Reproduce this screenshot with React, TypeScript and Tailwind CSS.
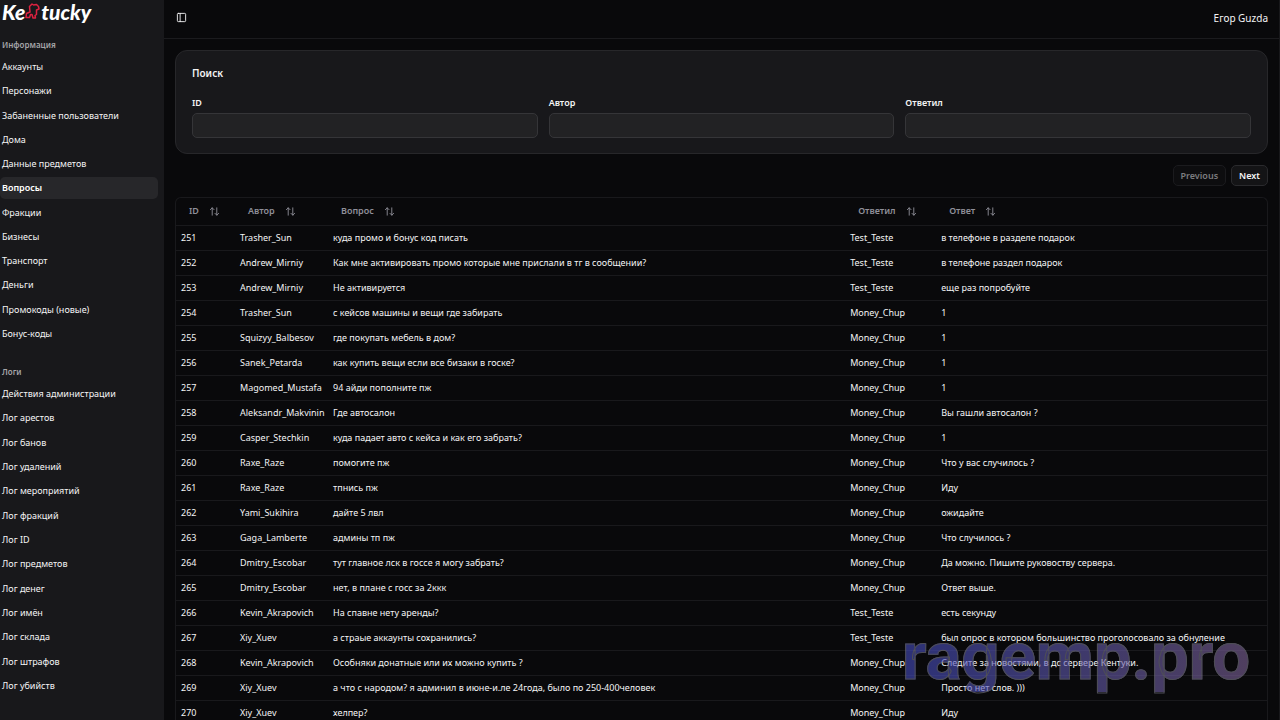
import React from "react";
import { ArrowUpDown, PanelLeft } from "lucide-react";

type Question = {
  id: number;
  author: string;
  question: string;
  answeredBy: string;
  answer: string;
};

const infoLinks = [
  "Аккаунты",
  "Персонажи",
  "Забаненные пользователи",
  "Дома",
  "Данные предметов",
  "Вопросы",
  "Фракции",
  "Бизнесы",
  "Транспорт",
  "Деньги",
  "Промокоды (новые)",
  "Бонус-коды",
];

const logLinks = [
  "Действия администрации",
  "Лог арестов",
  "Лог банов",
  "Лог удалений",
  "Лог мероприятий",
  "Лог фракций",
  "Лог ID",
  "Лог предметов",
  "Лог денег",
  "Лог имён",
  "Лог склада",
  "Лог штрафов",
  "Лог убийств",
];

const questions: Question[] = [
  { id: 251, author: "Trasher_Sun", question: "куда промо и бонус код писать", answeredBy: "Test_Teste", answer: "в телефоне в разделе подарок" },
  { id: 252, author: "Andrew_Mirniy", question: "Как мне активировать промо которые мне прислали в тг в сообщении?", answeredBy: "Test_Teste", answer: "в телефоне раздел подарок" },
  { id: 253, author: "Andrew_Mirniy", question: "Не активируется", answeredBy: "Test_Teste", answer: "еще раз попробуйте" },
  { id: 254, author: "Trasher_Sun", question: "с кейсов машины и вещи где забирать", answeredBy: "Money_Chup", answer: "1" },
  { id: 255, author: "Squizyy_Balbesov", question: "где покупать мебель в дом?", answeredBy: "Money_Chup", answer: "1" },
  { id: 256, author: "Sanek_Petarda", question: "как купить вещи если все бизаки в госке?", answeredBy: "Money_Chup", answer: "1" },
  { id: 257, author: "Magomed_Mustafa", question: "94 айди пополните пж", answeredBy: "Money_Chup", answer: "1" },
  { id: 258, author: "Aleksandr_Makvinin", question: "Где автосалон", answeredBy: "Money_Chup", answer: "Вы гашли автосалон ?" },
  { id: 259, author: "Casper_Stechkin", question: "куда падает авто с кейса и как его забрать?", answeredBy: "Money_Chup", answer: "1" },
  { id: 260, author: "Raxe_Raze", question: "помогите пж", answeredBy: "Money_Chup", answer: "Что у вас случилось ?" },
  { id: 261, author: "Raxe_Raze", question: "тпнись пж", answeredBy: "Money_Chup", answer: "Иду" },
  { id: 262, author: "Yami_Sukihira", question: "дайте 5 лвл", answeredBy: "Money_Chup", answer: "ожидайте" },
  { id: 263, author: "Gaga_Lamberte", question: "админы тп пж", answeredBy: "Money_Chup", answer: "Что случилось ?" },
  { id: 264, author: "Dmitry_Escobar", question: "тут главное лск в госсе я могу забрать?", answeredBy: "Money_Chup", answer: "Да можно. Пишите руковоству сервера." },
  { id: 265, author: "Dmitry_Escobar", question: "нет, в плане с госс за 2ккк", answeredBy: "Money_Chup", answer: "Ответ выше." },
  { id: 266, author: "Kevin_Akrapovich", question: "На спавне нету аренды?", answeredBy: "Test_Teste", answer: "есть секунду" },
  { id: 267, author: "Xiy_Xuev", question: "а страые аккаунты сохранились?", answeredBy: "Test_Teste", answer: "был опрос в котором большинство проголосовало за обнуление" },
  { id: 268, author: "Kevin_Akrapovich", question: "Особняки донатные или их можно купить ?", answeredBy: "Money_Chup", answer: "Следите за новостями, в дс сервере Кентуки." },
  { id: 269, author: "Xiy_Xuev", question: "а что с народом? я админил в июне-и.ле 24года, было по 250-400человек", answeredBy: "Money_Chup", answer: "Просто нет слов. )))" },
  { id: 270, author: "Xiy_Xuev", question: "хелпер?", answeredBy: "Money_Chup", answer: "Иду" },
];

const columns = [
  { title: "ID", width: "w-[59px]" },
  { title: "Автор", width: "w-[93px]" },
  { title: "Вопрос", width: "w-[47.4%]" },
  { title: "Ответил", width: "w-[91px]" },
  { title: "Ответ", width: "" },
];

const Logo = () => {
  return (
    <a
      href="#"
      aria-label="Kentucky"
      className="flex h-6 items-start pl-[2px] font-['Lato',sans-serif] text-[21px] leading-6 font-black italic text-white"
    >
      <span>Ke</span>
      <svg viewBox="0 0 16 20" className="h-5 w-4" fill="none" stroke="#dc2240" strokeWidth="1.5" strokeLinejoin="round">
        <path d="M1 17.5 1.5 13.5 5 12 4.5 6.5 7 4 8.5 5 11.5 4.5 13.5 6.5 14 9 11.5 10 11.5 14.5 10 15.5 10.5 18 8 18 7 14.5 5.5 14.5 4.5 17.5Z" />
      </svg>
      <span>tucky</span>
    </a>
  );
};

type LinksProps = {
  title: string;
  links: string[];
  height: string;
};

const SidebarGroup = ({ title, links, height }: LinksProps) => {
  return (
    <section>
      <h2 className="flex h-[22px] items-center px-[2px] text-[8px] font-semibold text-[#a5a5a9]">
        {title}
      </h2>
      <ul className={`flex flex-col justify-between ${height}`}>
        {links.map((link) => (
          <li key={link}>
            <a
              href="#"
              className={
                link === "Вопросы"
                  ? "flex h-[22px] items-center rounded-[5px] bg-[#27272a] px-[2px] font-semibold text-white"
                  : "flex h-[22px] items-center rounded-[5px] px-[2px]"
              }
            >
              {link}
            </a>
          </li>
        ))}
      </ul>
    </section>
  );
};

const SearchCard = () => {
  return (
    <form className="rounded-xl border border-[#27272a] bg-[#18181b] px-4 pt-4 pb-[15px]">
      <h1 className="text-[10px] leading-3 font-semibold">Поиск</h1>
      <div className="mt-[17px] grid grid-cols-3 gap-[11px]">
        {["ID", "Автор", "Ответил"].map((name) => (
          <div key={name} className="flex flex-col gap-[3px]">
            <label htmlFor={`search-${name}`} className="leading-[14px] font-semibold">
              {name}
            </label>
            <input
              id={`search-${name}`}
              type="text"
              className="h-[25px] w-full rounded-[5px] border border-[#353538] bg-[#222224] px-2 outline-none"
            />
          </div>
        ))}
      </div>
    </form>
  );
};

const QuestionsTable = () => {
  return (
    <div className="overflow-hidden rounded-t-[6px] border border-b-0 border-[#19191c]">
      <table className="w-full table-fixed text-left">
        <thead>
          <tr className="h-[27px] border-b border-[#19191c]">
            {columns.map((column) => (
              <th key={column.title} className={`p-0 pl-[13px] font-semibold text-[#8f8f99] ${column.width}`}>
                <button type="button" className="flex items-center gap-[10px]">
                  {column.title}
                  <ArrowUpDown size={11} />
                </button>
              </th>
            ))}
          </tr>
        </thead>
        <tbody>
          {questions.map((row) => (
            <tr key={row.id} className="h-[25px] border-b border-[#19191c] whitespace-nowrap">
              <td className="p-0 pl-[5px]">{row.id}</td>
              <td className="p-0 pl-[5px]">{row.author}</td>
              <td className="p-0 pl-[5px]">{row.question}</td>
              <td className="p-0 pl-[5px]">{row.answeredBy}</td>
              <td className="p-0 pl-[5px]">{row.answer}</td>
            </tr>
          ))}
        </tbody>
      </table>
    </div>
  );
};

const App = () => {
  return (
    <div className="relative flex h-screen overflow-hidden bg-[#09090b] font-['Noto_Sans',sans-serif] text-[9px] leading-3 text-[#f4f4f5]">
      <aside className="w-[164px] shrink-0 bg-[#18181b] pr-[6px]">
        <Logo />
        <nav className="flex flex-col gap-4 pt-[10px]">
          <SidebarGroup title="Информация" links={infoLinks} height="h-[289px]" />
          <SidebarGroup title="Логи" links={logLinks} height="h-[314px]" />
        </nav>
      </aside>

      <main className="min-w-0 flex-1 border-r border-[#18181b]">
        <header className="flex h-[39px] items-center justify-between border-b border-[#1b1b1e] pr-[11px] pb-[3px] pl-3">
          <button type="button" aria-label="Меню">
            <PanelLeft size={11} />
          </button>
          <span className="text-[10px]">Егор Guzda</span>
        </header>

        <div className="flex flex-col gap-[11px] pt-[11px] pr-[11px] pl-[11px]">
          <SearchCard />
          <div className="flex justify-end gap-[5px]">
            <button
              type="button"
              disabled
              className="h-[21px] rounded-[5px] border border-[#1b1b1e] bg-[#0d0d0f] px-[7px] font-semibold text-[#7c7c7f]"
            >
              Previous
            </button>
            <button
              type="button"
              className="h-[21px] rounded-[5px] border border-[#2a2a2d] bg-[#141416] px-[7px] font-semibold"
            >
              Next
            </button>
          </div>
          <QuestionsTable />
        </div>
      </main>

      {/* watermark */}
      <div className="pointer-events-none absolute right-[30px] bottom-[28px] bg-linear-to-r from-[#454cc0] to-[#7f6398] bg-clip-text font-['Roboto',sans-serif] text-[67px] leading-[72px] font-bold text-transparent opacity-60 [-webkit-text-stroke:1px_#7c7c88]">
        ragemp.pro
      </div>
    </div>
  );
};

export default App;
